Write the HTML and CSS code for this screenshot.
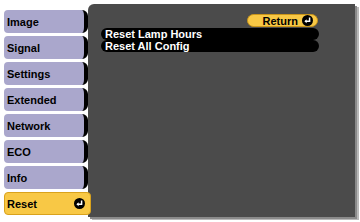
FILE: index.html
```html
<!DOCTYPE html>
<html lang="en">
<head>
  <meta charset="UTF-8" />
  <meta name="viewport" content="width=device-width, initial-scale=1.0"/>
  <title>Reset Menu</title>
  <link rel="stylesheet" href="styles.css">
</head>
<body>

  <div class="screen">
    <!-- menu tabs -->
    <nav class="tabs">
      <div class="tab">Image</div>
      <div class="tab">Signal</div>
      <div class="tab">Settings</div>
      <div class="tab">Extended</div>
      <div class="tab">Network</div>
      <div class="tab">ECO</div>
      <div class="tab">Info</div>
      <div class="tab active">
        <span>Reset</span>
        <svg class="enter-icon" width="11" height="11" viewBox="0 0 11 11">
          <circle cx="5.5" cy="5.5" r="5.5" fill="#000"/>
          <path d="M7.6 2.6 V6.2 H3.6" fill="none" stroke="#fff" stroke-width="1.5"/>
          <path d="M2.4 6.2 L4.6 4.2 V8.2 Z" fill="#fff"/>
        </svg>
      </div>
    </nav>

    <!-- sub menu -->
    <section class="panel">
      <div class="panel-head">
        <span class="return-btn">
          Return
          <svg class="enter-icon" width="11" height="11" viewBox="0 0 11 11">
            <circle cx="5.5" cy="5.5" r="5.5" fill="#000"/>
            <path d="M7.6 2.6 V6.2 H3.6" fill="none" stroke="#fff" stroke-width="1.5"/>
            <path d="M2.4 6.2 L4.6 4.2 V8.2 Z" fill="#fff"/>
          </svg>
        </span>
      </div>
      <ul class="options">
        <li>Reset Lamp Hours</li>
        <li>Reset All Config</li>
      </ul>
    </section>
  </div>

</body>
</html>
```

FILE: styles.css
```css
* {
  margin: 0;
  padding: 0;
  box-sizing: border-box;
  font-family: 'Liberation Sans', Arial, sans-serif;
}

body {
  background: #ffffff;
  width: 360px;
  height: 222px;
  overflow: hidden;
}

.screen {
  display: flex;
  align-items: flex-start;
  padding: 4px 0 0 4px;
}

.tabs {
  position: relative;
  z-index: 1;
  display: flex;
  flex-direction: column;
  gap: 3px;
  padding-top: 6px;
  margin-right: -3px;
}

.tab {
  width: 84px;
  height: 23px;
  display: flex;
  align-items: center;
  justify-content: space-between;
  padding: 0 5px 0 3px;
  background: #aaa7cc;
  border-right: 4px solid #000;
  border-radius: 4px 6px 6px 4px;
  color: #000;
  font-size: 11px;
  font-weight: bold;
}

.tab.active {
  width: 87px;
  background: #f8c845;
  border: 1px solid #d9a21c;
  border-radius: 4px;
  padding-left: 2px;
}

.enter-icon {
  display: block;
}

.panel {
  width: 267px;
  height: 213px;
  background: #4b4b4b;
  border-radius: 6px 0 0 0;
  box-shadow: 2px 2px 0 #8a8a8a, 4px 3px 0 #b9b9b9;
  padding: 10px 36px 0 13px;
}

.panel-head {
  display: flex;
  justify-content: flex-end;
  margin-right: 1px;
}

.return-btn {
  width: 71px;
  height: 13px;
  display: flex;
  align-items: center;
  justify-content: flex-end;
  gap: 4px;
  padding-right: 4px;
  background: #f8c845;
  border: 1px solid #c9951a;
  border-radius: 7px;
  color: #000;
  font-size: 11px;
  font-weight: bold;
}

.options {
  list-style: none;
  margin-top: 1px;
}

.options li {
  height: 12px;
  display: flex;
  align-items: center;
  padding-left: 4px;
  background: #000;
  border-radius: 6px;
  color: #fff;
  font-size: 11px;
  font-weight: bold;
  line-height: 12px;
}
```
